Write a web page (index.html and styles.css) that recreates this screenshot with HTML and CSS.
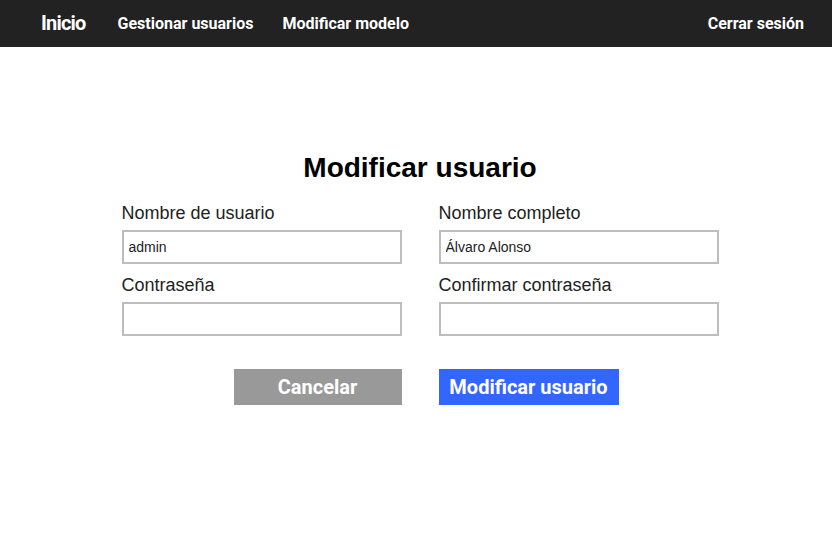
FILE: index.html
```html
<!DOCTYPE html>
<html lang="es">
<head>
<meta charset="utf-8">
<link rel="stylesheet" href="styles.css">
</head>
<body>
<nav class="navbar">
  <a class="brand" href="#">Inicio</a>
  <a class="nav-link" href="#">Gestionar usuarios</a>
  <a class="nav-link" href="#">Modificar modelo</a>
  <a class="nav-link logout" href="#">Cerrar sesión</a>
</nav>
<main class="main">
  <h1 class="title">Modificar usuario</h1>
  <form class="form">
    <div class="field">
      <label class="label">Nombre de usuario</label>
      <input class="input" type="text" value="admin">
    </div>
    <div class="field">
      <label class="label">Nombre completo</label>
      <input class="input" type="text" value="Álvaro Alonso">
    </div>
    <div class="field">
      <label class="label">Contraseña</label>
      <input class="input" type="password">
    </div>
    <div class="field">
      <label class="label">Confirmar contraseña</label>
      <input class="input" type="password">
    </div>
    <div class="actions-left">
      <button class="btn btn-cancel" type="button">Cancelar</button>
    </div>
    <div class="actions-right">
      <button class="btn btn-primary" type="button">Modificar usuario</button>
    </div>
  </form>
</main>
</body>
</html>
```
FILE: styles.css
```css
* { box-sizing: border-box; }
html, body { margin: 0; padding: 0; background: #fff; }
body { font-family: "Liberation Sans", Arial, sans-serif; color: #222; }

.navbar {
  height: 47px;
  background: #222222;
  display: flex;
  align-items: center;
  padding: 0 28px 1px 41px;
}
.navbar a { color: #fff; text-decoration: none; font-family: Roboto, "Liberation Sans", sans-serif; font-weight: 700; }
.brand { font-size: 20px; letter-spacing: -0.8px; margin-right: 32px; }
.nav-link { font-size: 16px; margin-right: 29px; }
.logout { margin-left: auto; margin-right: 0; }

.main {
  width: 597px;
  margin: 0 auto;
  padding-top: 105px;
  position: relative;
  left: 4px;
}
.title {
  margin: 0 0 18px;
  text-align: center;
  font-size: 28px;
  font-weight: 700;
  color: #000;
  line-height: 32px;
}
.form {
  display: grid;
  grid-template-columns: 280px 280px;
  column-gap: 37px;
  row-gap: 10px;
}
.field { display: flex; flex-direction: column; }
.label { font-size: 18px; line-height: 22px; margin-bottom: 6px; color: #222; }
.input {
  width: 280px;
  height: 34px;
  border: 2px solid #bdbdbd;
  padding: 0 5px;
  font-family: "Liberation Sans", Arial, sans-serif;
  font-size: 14px;
  color: #222;
  outline: none;
}
.actions-left { display: flex; justify-content: flex-end; margin-top: 23px; }
.actions-right { display: flex; justify-content: flex-start; margin-top: 23px; }
.btn {
  height: 36px;
  border: none;
  color: #fff;
  font-family: Roboto, "Liberation Sans", sans-serif;
  font-weight: 700;
  font-size: 20px;
  cursor: pointer;
}
.btn-cancel { width: 168px; background: #999999; }
.btn-primary { width: 180px; background: #3366ff; }
```
